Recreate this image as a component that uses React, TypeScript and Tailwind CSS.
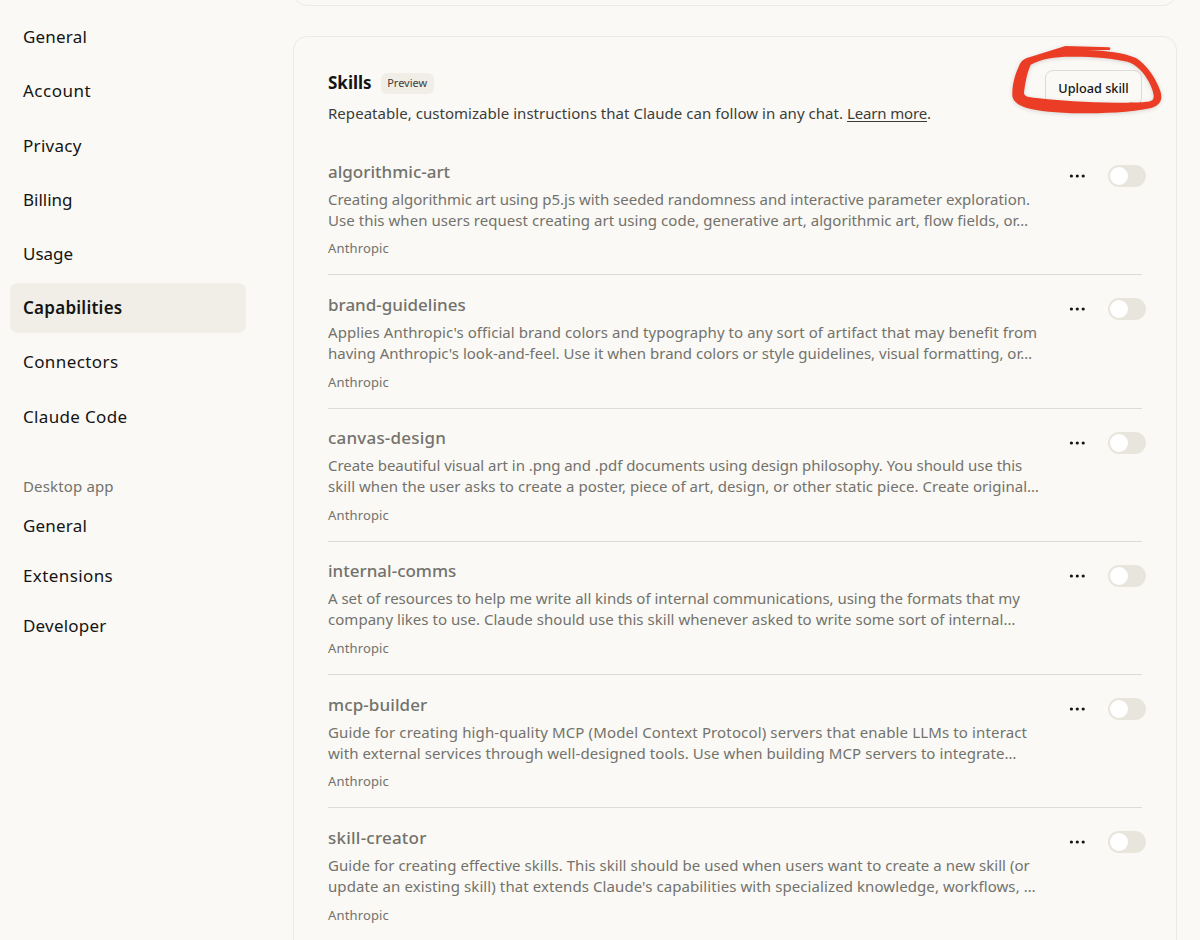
import clsx from "clsx";

const accountNav = [
  { label: "General", tracking: "tracking-[0.2px]" },
  { label: "Account", tracking: "tracking-[0.5px]" },
  { label: "Privacy", tracking: "tracking-[0.3px]" },
  { label: "Billing", tracking: "tracking-normal" },
  { label: "Usage", tracking: "tracking-normal" },
  { label: "Capabilities", tracking: "tracking-[0.25px]", active: true },
  { label: "Connectors", tracking: "tracking-[0.42px]" },
  { label: "Claude Code", tracking: "tracking-[0.34px]" },
];

const desktopNav = [
  { label: "General", tracking: "tracking-[0.2px]" },
  { label: "Extensions", tracking: "tracking-[0.4px]" },
  { label: "Developer", tracking: "tracking-[0.2px]" },
];

const skills = [
  {
    name: "algorithmic-art",
    tracking: "tracking-normal",
    lines: [
      {
        text: "Creating algorithmic art using p5.js with seeded randomness and interactive parameter exploration.",
        tracking: "tracking-[-0.02px]",
      },
      {
        text: "Use this when users request creating art using code, generative art, algorithmic art, flow fields, or…",
        tracking: "tracking-[0.04px]",
      },
    ],
  },
  {
    name: "brand-guidelines",
    tracking: "tracking-normal",
    lines: [
      {
        text: "Applies Anthropic's official brand colors and typography to any sort of artifact that may benefit from",
        tracking: "tracking-[0.06px]",
      },
      {
        text: "having Anthropic's look-and-feel. Use it when brand colors or style guidelines, visual formatting, or…",
        tracking: "tracking-[0.01px]",
      },
    ],
  },
  {
    name: "canvas-design",
    tracking: "tracking-[0.2px]",
    lines: [
      {
        text: "Create beautiful visual art in .png and .pdf documents using design philosophy. You should use this",
        tracking: "tracking-[-0.04px]",
      },
      {
        text: "skill when the user asks to create a poster, piece of art, design, or other static piece. Create original…",
        tracking: "tracking-[0.05px]",
      },
    ],
  },
  {
    name: "internal-comms",
    tracking: "tracking-normal",
    lines: [
      {
        text: "A set of resources to help me write all kinds of internal communications, using the formats that my",
        tracking: "tracking-[-0.03px]",
      },
      {
        text: "company likes to use. Claude should use this skill whenever asked to write some sort of internal…",
        tracking: "tracking-[0.03px]",
      },
    ],
  },
  {
    name: "mcp-builder",
    tracking: "tracking-[0.1px]",
    lines: [
      {
        text: "Guide for creating high-quality MCP (Model Context Protocol) servers that enable LLMs to interact",
        tracking: "tracking-[0.134px]",
      },
      {
        text: "with external services through well-designed tools. Use when building MCP servers to integrate…",
        tracking: "tracking-[0.064px]",
      },
    ],
  },
  {
    name: "skill-creator",
    tracking: "tracking-[0.22px]",
    lines: [
      {
        text: "Guide for creating effective skills. This skill should be used when users want to create a new skill (or",
        tracking: "tracking-[0.04px]",
      },
      {
        text: "update an existing skill) that extends Claude's capabilities with specialized knowledge, workflows, …",
        tracking: "tracking-[0.09px]",
      },
    ],
  },
];

export default function App() {
  return (
    <div className="flex h-[940px] w-[1200px] overflow-hidden bg-[#faf9f5] font-['Noto_Sans',sans-serif] text-[#141413]">
      <aside className="w-[256px] shrink-0 pl-[10px] pt-[12.5px]">
        <nav className="flex w-[236px] flex-col gap-[4.2px]">
          {accountNav.map((item) => (
            <a
              key={item.label}
              className={clsx(
                "flex h-[50px] items-center rounded-lg px-[13px] pb-px text-[17px]",
                item.tracking,
                item.active && "bg-[#f0eee6] font-semibold",
              )}
            >
              {item.label}
            </a>
          ))}
        </nav>
        <h3 className="mt-[32px] px-[13px] text-[15px] leading-[24px] tracking-[0.15px] text-[#73726c]">
          Desktop app
        </h3>
        <nav className="mt-[3px] flex w-[236px] flex-col">
          {desktopNav.map((item) => (
            <a
              key={item.label}
              className={clsx("flex h-[49.8px] items-center px-[13px] text-[17px]", item.tracking)}
            >
              {item.label}
            </a>
          ))}
        </nav>
      </aside>

      <main className="ml-[37px] w-[884px] shrink-0">
        <div className="h-[6px] overflow-hidden">
          <div className="-mt-[34px] h-[40px] rounded-[14px] border border-[#ebeae5]" />
        </div>

        <section className="relative mt-[30px] h-[960px] rounded-[14px] border border-[#ebeae5] px-[34px] pt-[33px]">
          <header className="flex h-[72px] items-start justify-between">
            <div>
              <div className="flex items-center gap-[9px] pt-px">
                <h2 className="text-[17px] font-bold leading-[24px]">Skills</h2>
                <span className="flex h-[21px] items-center rounded-md bg-[#f0eee6] px-[6.5px] text-[11px] text-[#3d3d3a]">
                  Preview
                </span>
              </div>
              <p className="mt-[7px] whitespace-nowrap text-[15px] leading-[22px] tracking-[0.04px] text-[#3d3d3a]">
                Repeatable, customizable instructions that Claude can follow in any chat.{" "}
                <a className="tracking-[-0.15px] underline underline-offset-2">Learn more</a>.
              </p>
            </div>
            <button className="h-[36px] w-[97px] rounded-lg border border-[#dddcd6] pt-px text-[12.7px] font-medium">
              Upload skill
            </button>
          </header>

          <ul>
            {skills.map((skill) => (
              <li key={skill.name} className="flex h-[133.25px] justify-between border-b border-[#dddcd6] pt-[17.5px]">
                <div className="whitespace-nowrap text-[#73726c]">
                  <h3 className={clsx("text-[17px] font-medium leading-[24px]", skill.tracking)}>{skill.name}</h3>
                  <div className="mt-[5px] text-[15px] leading-[21.2px]">
                    {skill.lines.map((line) => (
                      <p key={line.text} className={line.tracking}>
                        {line.text}
                      </p>
                    ))}
                  </div>
                  <p className="mt-[8.5px] text-[13px] leading-[18px] tracking-[0.15px]">Anthropic</p>
                </div>
                <div className="-mr-[4px] mt-[5.5px] flex h-[22px] shrink-0 items-center gap-[23px]">
                  <svg width="16" height="4" viewBox="0 0 16 4" fill="#141413">
                    <circle cx="2.4" cy="2" r="1.6" />
                    <circle cx="8.3" cy="2" r="1.6" />
                    <circle cx="14.2" cy="2" r="1.6" />
                  </svg>
                  <span className="flex h-[22px] w-[38px] items-center rounded-full bg-[#e8e6dc] pl-[1.5px]">
                    <span className="h-[18px] w-[18px] rounded-full bg-white" />
                  </span>
                </div>
              </li>
            ))}
          </ul>

          {/* hand-drawn marker around the upload button */}
          <svg
            className="pointer-events-none absolute -top-[7px] left-[696px] h-[100px] w-[210px] overflow-visible drop-shadow-sm"
            viewBox="0 0 630 300"
            fill="#eb3d26"
            fillRule="evenodd"
          >
            <path d="M226 48 L358 52 Q364 56 358 60 L290 60 C350 62 400 68 438 84 C470 104 498 145 511 183 C518 206 514 225 484 234 C420 248 340 250 270 250 C200 249 145 243 108 233 C82 225 67 211 67 195 C66 165 75 134 86 110 C94 92 102 86 118 82 Z M122 104 C155 86 195 80 240 80 C300 79 370 85 412 95 C440 103 462 128 477 156 C489 180 495 201 488 209 C482 216 460 217 400 218 C300 219 210 212 140 204 C113 201 102 199 102 188 C105 160 112 126 122 104 Z" />
          </svg>
        </section>
      </main>
    </div>
  );
}
